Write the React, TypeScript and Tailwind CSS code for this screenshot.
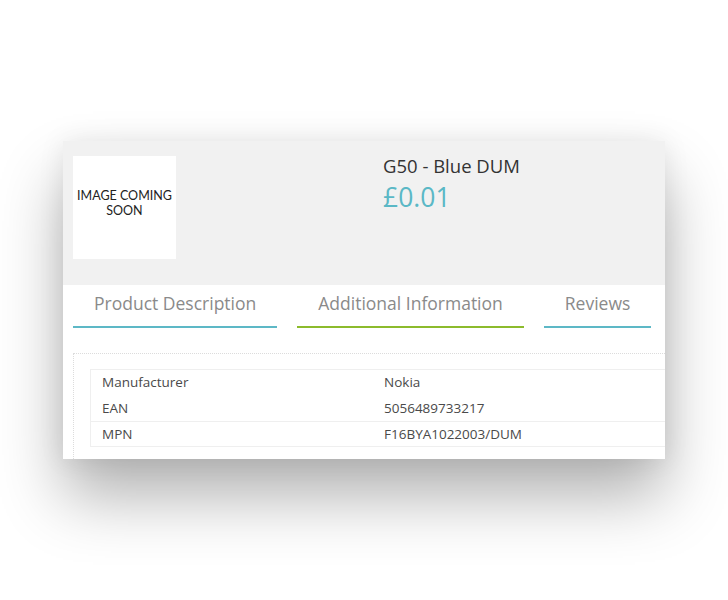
export default function App() {
  const tabs = [
    { label: "Product Description", line: "bg-[#5db8c6]" },
    { label: "Additional Information", line: "bg-[#8cbb2c]" },
    { label: "Reviews", line: "bg-[#5db8c6]" },
  ];

  const rows = [
    { name: "Manufacturer", value: "Nokia", border: "border-t" },
    { name: "EAN", value: "5056489733217", border: "" },
    { name: "MPN", value: "F16BYA1022003/DUM", border: "border-y" },
  ];

  return (
    <div className="min-h-[600px] w-[728px] bg-white pt-[141px] font-['Open_Sans',sans-serif]">
      <div className="ml-[63px] w-[602px] h-[318px] overflow-hidden bg-white shadow-[0_38px_60px_rgba(0,0,0,0.3),0_0_25px_rgba(0,0,0,0.08)]">
        {/* header */}
        <div className="flex h-[144px] bg-[#f1f1f1] px-[10px] pt-[15px]">
          <div className="flex h-[103px] w-[103px] shrink-0 items-center justify-center bg-white pb-[10px] text-center text-[12.5px] leading-[15px] text-[#222] font-['Lato',sans-serif]">
            IMAGE COMING
            <br />
            SOON
          </div>
          <div className="ml-[207px] -mt-[2px]">
            <h1 className="text-[18.5px] leading-[24px] text-[#333]">G50 - Blue DUM</h1>
            <p className="mt-[2px] text-[26.5px] leading-[34px] text-[#5ab8c6]">£0.01</p>
          </div>
        </div>

        {/* tabs */}
        <div className="flex gap-[20px] px-[10px] pt-[6px]">
          {tabs.map((tab) => (
            <div key={tab.label} className="flex flex-col">
              <span className="px-[21px] text-[17.5px] leading-[24px] text-[#8a8a8a]">{tab.label}</span>
              <span className={`mt-[11px] h-[2px] w-full ${tab.line}`}></span>
            </div>
          ))}
        </div>

        {/* additional information */}
        <div className="ml-[10px] mt-[25px] w-[620px] h-[120px] border border-dotted border-[#dcdcdc] pl-[16px] pt-[15px]">
          <div className="w-[600px] border-l border-[#efefef] text-[13.5px] text-[#4a4a4a]">
            {rows.map((row) => (
              <div key={row.name} className={`flex h-[26px] items-center border-[#efefef] ${row.border}`}>
                <span className="w-[293px] pl-[11px]">{row.name}</span>
                <span>{row.value}</span>
              </div>
            ))}
          </div>
        </div>
      </div>
    </div>
  );
}
